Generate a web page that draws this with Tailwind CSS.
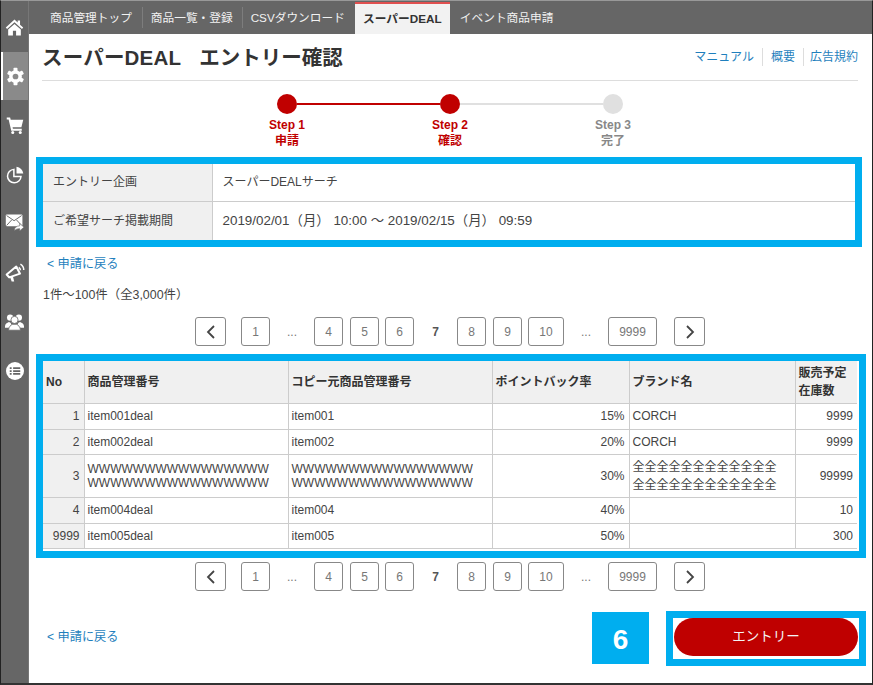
<!DOCTYPE html>
<html lang="ja">
<head>
<meta charset="UTF-8" />
<title>スーパーDEAL エントリー確認</title>
<script src="https://cdn.jsdelivr.net/npm/@tailwindcss/browser@4"></script>
</head>
<body class="bg-white">
<div class="w-[873px] h-[685px] overflow-hidden flex border-l border-l-[#222] border-t border-t-[#999] border-b-2 border-b-[#333] border-r border-r-[#222] font-['Liberation_Sans','Noto_Sans_CJK_JP',sans-serif] text-[12px] text-[#444]">

  <!-- sidebar -->
  <nav class="w-[28px] shrink-0 bg-[#666] flex flex-col text-white border-r border-r-[#777]">
    <div class="h-[51px] flex items-center justify-center pt-[1px]">
      <svg class="w-[19px] h-[19px]" viewBox="0 0 24 24" fill="#fff"><path d="M12 2 1 12l1.600 1.800L12 5.300l9.400 8.500L23 12l-4-3.600V3h-3v2.700z"/><path d="M12 7.500 4 14.600V22h6v-6h4v6h6v-7.400z"/></svg>
    </div>
    <div class="h-[48px] flex items-center justify-center bg-[#8a8a8a] border-l-2 border-l-white">
      <svg class="w-[19px] h-[19px]" viewBox="0 0 24 24"><g fill="#fff"><circle cx="12" cy="12" r="8"/><rect x="9.500" y="1" width="5" height="22" rx="1"/><rect x="9.500" y="1" width="5" height="22" rx="1" transform="rotate(60 12 12)"/><rect x="9.500" y="1" width="5" height="22" rx="1" transform="rotate(120 12 12)"/></g><circle cx="12" cy="12" r="3.600" fill="#8a8a8a"/></svg>
    </div>
    <div class="h-[49px] flex items-center justify-center">
      <svg class="w-[18px] h-[18px]" viewBox="0 0 24 24" fill="#fff"><path d="M1 2h4.500l.8 3H23l-2.500 10H8.800l.4 2H21v2.500H7L3.500 4.500H1z"/><circle cx="9" cy="22" r="2"/><circle cx="19" cy="22" r="2"/></svg>
    </div>
    <div class="h-[49px] flex items-center justify-center pt-[3px]">
      <svg class="w-[18px] h-[18px]" viewBox="0 0 24 24" fill="none"><path d="M10.500 4.500a9 9 0 1 0 9.500 9.500h-9.500z" stroke="#fff" stroke-width="2"/><path d="M14 1a10 10 0 0 1 9 9h-9z" fill="#fff"/></svg>
    </div>
    <div class="h-[49px] flex items-center justify-center pb-[3px]">
      <svg class="w-[19px] h-[19px]" viewBox="0 0 24 24"><rect x="1" y="3" width="21" height="15" rx="1.500" fill="#fff"/><path d="M2 4.500 11.500 11 21 4.500M2 17l6.500-7M21 17l-6.500-7" stroke="#666" stroke-width="1.200" fill="none"/><path d="M11.500 24c.5-4.500 3.200-6.500 7-6.500V14.500l5.500 4.700-5.500 4.700v-2.900c-2.800 0-5 .8-7 3z" fill="#fff" stroke="#666" stroke-width=".8"/></svg>
    </div>
    <div class="h-[49px] flex items-center justify-center">
      <svg class="w-[20px] h-[20px]" viewBox="0 0 24 24" fill="none"><path d="M2 15 13.500 5.500 18 14 5 18.500z" stroke="#fff" stroke-width="2.400" stroke-linejoin="round"/><path d="m6 18 2 5.500h3L9.500 17z" fill="#fff"/><path d="M16.500 6.500a4 4 0 0 1 2 3.500M18.500 2.500a8 8 0 0 1 4 7" stroke="#fff" stroke-width="1.800"/></svg>
    </div>
    <div class="h-[49px] flex items-center justify-center pt-[2px]">
      <svg class="w-[19px] h-[19px]" viewBox="0 0 24 24" fill="#fff"><circle cx="6.500" cy="7" r="4"/><circle cx="17.500" cy="7" r="4"/><path d="M0 18c0-3 2.500-4.500 5-5.500l2 1 2 4V20H0zM24 18c0-3-2.500-4.500-5-5.500l-2 1-2 4V20h9z"/><circle cx="12" cy="10" r="4.500" stroke="#666"/><path d="M4.500 23c0-4.500 3-6.500 5-7.500h5c2 1 5 3 5 7.500z" stroke="#666"/></svg>
    </div>
    <div class="h-[49px] flex items-center justify-center pt-[2px]">
      <svg class="w-[18px] h-[18px]" viewBox="0 0 24 24"><circle cx="12" cy="12" r="12" fill="#fff"/><path d="M5 7h2.500v2.300H5zM9.500 7H19v2.300H9.500zM5 10.900h2.500v2.300H5zM9.500 10.900H19v2.300H9.500zM5 14.800h2.500v2.300H5zM9.500 14.800H19v2.300H9.500z" fill="#666"/></svg>
    </div>
  </nav>

  <div class="flex-1 min-w-0 flex flex-col">
    <!-- tabs -->
    <div class="h-[33px] shrink-0 bg-[#666] flex text-[11.7px] text-[#f2f2f2] pl-[21px]">
      <a class="pr-[10px] flex items-center border-r border-r-[#7d7d7d] my-[6px]">商品管理トップ</a>
      <a class="pl-[8px] pr-[9px] flex items-center border-r border-r-[#7d7d7d] my-[6px]">商品一覧・登録</a>
      <a class="pl-[8px] pr-[10px] flex items-center">CSVダウンロード</a>
      <a class="w-[95px] mt-[1px] flex items-center justify-center bg-[#f2f2f2] text-[#333] border-t-2 border-t-[#e05050] font-bold">スーパーDEAL</a>
      <a class="pl-[10px] flex items-center">イベント商品申請</a>
    </div>

    <main class="flex-1 flex flex-col pl-[7px]">
      <!-- heading -->
      <div class="h-[47px] shrink-0 ml-[6px] mr-[14px] flex items-center justify-between border-b border-b-[#ddd]">
        <h1 class="pt-[2px] text-[20.5px] font-bold text-[#333]"><span class="tracking-[0.2px]">スーパーDEAL</span><span class="ml-[18px]">エントリー確認</span></h1>
        <div class="flex items-center text-[12px] text-[#1f7fbd]">
          <a class="pr-[8px] border-r border-r-[#ddd]">マニュアル</a>
          <a class="px-[8px] border-r border-r-[#ddd]">概要</a>
          <a class="pl-[6px]">広告規約</a>
        </div>
      </div>

      <!-- steps -->
      <div class="h-[76px] shrink-0 pt-[13px]">
        <div class="flex items-center ml-[241px]">
          <span class="w-[20px] h-[20px] rounded-full bg-[#c00000]"></span>
          <span class="w-[143px] h-[2px] bg-[#c00000]"></span>
          <span class="w-[20px] h-[20px] rounded-full bg-[#c00000]"></span>
          <span class="w-[143px] h-[2px] bg-[#e0e0e0]"></span>
          <span class="w-[20px] h-[20px] rounded-full bg-[#e0e0e0]"></span>
        </div>
        <div class="flex ml-[201px] mt-[3px] font-bold text-[12px] leading-[16px] text-center">
          <div class="w-[100px] text-[#c00000]">Step 1<br />申請</div>
          <div class="w-[100px] ml-[63px] text-[#c00000]">Step 2<br />確認</div>
          <div class="w-[100px] ml-[63px] text-[#888]">Step 3<br />完了</div>
        </div>
      </div>

      <!-- entry summary -->
      <div class="w-[826px] h-[90px] shrink-0 border-[7px] border-[#00aeef] bg-white">
        <table class="w-full h-full table-fixed border-collapse text-[12px]">
          <tr class="h-[37px] border-b border-b-[#ccc]">
            <th class="w-[169px] bg-[#f0f0f0] border-r border-r-[#ccc] font-normal text-left pl-[10px]">エントリー企画</th>
            <td class="pl-[10px]">スーパーDEALサーチ</td>
          </tr>
          <tr>
            <th class="bg-[#f0f0f0] border-r border-r-[#ccc] font-normal text-left pl-[10px]">ご希望サーチ掲載期間</th>
            <td class="pl-[10px] text-[13.4px]">2019/02/01（月） 10:00 ～ 2019/02/15（月） 09:59</td>
          </tr>
        </table>
      </div>

      <a class="mt-[9px] ml-[11px] leading-[16px] text-[12.200px] text-[#1f7fbd]">&lt; 申請に戻る</a>
      <p class="mt-[15px] ml-[7px] leading-[16px] text-[12.400px]">1件～100件（全3,000件）</p>

      <!-- pagination top -->
      <div class="mt-[14px] ml-[159px] h-[29px] shrink-0 flex items-center text-[12px] text-[#777]">
        <a class="w-[31px] h-[29px] flex items-center justify-center border border-[#888] rounded-[3px]"><svg class="w-[12px] h-[14px]" viewBox="0 0 12 14" fill="none" stroke="#444" stroke-width="1.800"><path d="M9 1 3 7l6 6"/></svg></a>
        <a class="ml-[15px] w-[29px] h-[29px] flex items-center justify-center border border-[#888] rounded-[3px]">1</a>
        <span class="w-[44px] text-center">...</span>
        <a class="w-[29px] h-[29px] flex items-center justify-center border border-[#888] rounded-[3px]">4</a>
        <a class="ml-[7px] w-[29px] h-[29px] flex items-center justify-center border border-[#888] rounded-[3px]">5</a>
        <a class="ml-[6px] w-[29px] h-[29px] flex items-center justify-center border border-[#888] rounded-[3px]">6</a>
        <b class="w-[43px] text-center text-[#555]">7</b>
        <a class="w-[29px] h-[29px] flex items-center justify-center border border-[#888] rounded-[3px]">8</a>
        <a class="ml-[7px] w-[29px] h-[29px] flex items-center justify-center border border-[#888] rounded-[3px]">9</a>
        <a class="ml-[6px] w-[36px] h-[29px] flex items-center justify-center border border-[#888] rounded-[3px]">10</a>
        <span class="w-[44px] text-center">...</span>
        <a class="w-[49px] h-[29px] flex items-center justify-center border border-[#888] rounded-[3px]">9999</a>
        <a class="ml-[17px] w-[31px] h-[29px] flex items-center justify-center border border-[#888] rounded-[3px]"><svg class="w-[12px] h-[14px]" viewBox="0 0 12 14" fill="none" stroke="#444" stroke-width="1.800"><path d="m3 1 6 6-6 6"/></svg></a>
      </div>

      <!-- item table -->
      <div class="mt-[8px] w-[830px] h-[204px] shrink-0 border-[7px] border-[#00aeef] bg-white">
        <table class="w-[814px] table-fixed border-collapse text-[12px] leading-[14px] border-b border-b-[#ccc]">
          <colgroup>
            <col class="w-[41px]" /><col class="w-[204px]" /><col class="w-[204px]" /><col class="w-[137px]" /><col class="w-[166px]" /><col class="w-[62px]" />
          </colgroup>
          <thead>
            <tr class="h-[42px] bg-[#f0f0f0] text-left text-[#333] border-b border-b-[#ccc]">
              <th class="pl-[3px] border-r border-r-[#ccc]">No</th>
              <th class="pl-[3px] border-r border-r-[#ccc]">商品管理番号</th>
              <th class="pl-[3px] border-r border-r-[#ccc]">コピー元商品管理番号</th>
              <th class="pl-[3px] border-r border-r-[#ccc]">ポイントバック率</th>
              <th class="pl-[3px] border-r border-r-[#ccc]">ブランド名</th>
              <th class="pl-[3px] leading-[18px]">販売予定<br />在庫数</th>
            </tr>
          </thead>
          <tbody>
            <tr class="h-[26px] border-b border-b-[#ccc]">
              <td class="bg-[#f0f0f0] border-r border-r-[#ccc] text-right pr-[4px]">1</td>
              <td class="pl-[3px] border-r border-r-[#ccc]">item001deal</td>
              <td class="pl-[3px] border-r border-r-[#ccc]">item001</td>
              <td class="pr-[4px] border-r border-r-[#ccc] text-right">15%</td>
              <td class="pl-[3px] border-r border-r-[#ccc]">CORCH</td>
              <td class="pr-[4px] text-right">9999</td>
            </tr>
            <tr class="h-[25px] border-b border-b-[#ccc]">
              <td class="bg-[#f0f0f0] border-r border-r-[#ccc] text-right pr-[4px]">2</td>
              <td class="pl-[3px] border-r border-r-[#ccc]">item002deal</td>
              <td class="pl-[3px] border-r border-r-[#ccc]">item002</td>
              <td class="pr-[4px] border-r border-r-[#ccc] text-right">20%</td>
              <td class="pl-[3px] border-r border-r-[#ccc]">CORCH</td>
              <td class="pr-[4px] text-right">9999</td>
            </tr>
            <tr class="h-[43px] border-b border-b-[#ccc]">
              <td class="bg-[#f0f0f0] border-r border-r-[#ccc] text-right pr-[4px]">3</td>
              <td class="pl-[3px] border-r border-r-[#ccc]">WWWWWWWWWWWWWWWW<br />WWWWWWWWWWWWWWWW</td>
              <td class="pl-[3px] border-r border-r-[#ccc]">WWWWWWWWWWWWWWWW<br />WWWWWWWWWWWWWWWW</td>
              <td class="pr-[4px] border-r border-r-[#ccc] text-right">30%</td>
              <td class="pl-[3px] border-r border-r-[#ccc] leading-[18px]">全全全全全全全全全全全全<br />全全全全全全全全全全全全</td>
              <td class="pr-[4px] text-right">99999</td>
            </tr>
            <tr class="h-[26px] border-b border-b-[#ccc]">
              <td class="bg-[#f0f0f0] border-r border-r-[#ccc] text-right pr-[4px]">4</td>
              <td class="pl-[3px] border-r border-r-[#ccc]">item004deal</td>
              <td class="pl-[3px] border-r border-r-[#ccc]">item004</td>
              <td class="pr-[4px] border-r border-r-[#ccc] text-right">40%</td>
              <td class="pl-[3px] border-r border-r-[#ccc]"></td>
              <td class="pr-[4px] text-right">10</td>
            </tr>
            <tr class="h-[25px]">
              <td class="bg-[#f0f0f0] border-r border-r-[#ccc] text-right pr-[4px]">9999</td>
              <td class="pl-[3px] border-r border-r-[#ccc]">item005deal</td>
              <td class="pl-[3px] border-r border-r-[#ccc]">item005</td>
              <td class="pr-[4px] border-r border-r-[#ccc] text-right">50%</td>
              <td class="pl-[3px] border-r border-r-[#ccc]"></td>
              <td class="pr-[4px] text-right">300</td>
            </tr>
          </tbody>
        </table>
      </div>

      <!-- pagination bottom -->
      <div class="mt-[4px] ml-[159px] h-[29px] shrink-0 flex items-center text-[12px] text-[#777]">
        <a class="w-[31px] h-[29px] flex items-center justify-center border border-[#888] rounded-[3px]"><svg class="w-[12px] h-[14px]" viewBox="0 0 12 14" fill="none" stroke="#444" stroke-width="1.800"><path d="M9 1 3 7l6 6"/></svg></a>
        <a class="ml-[15px] w-[29px] h-[29px] flex items-center justify-center border border-[#888] rounded-[3px]">1</a>
        <span class="w-[44px] text-center">...</span>
        <a class="w-[29px] h-[29px] flex items-center justify-center border border-[#888] rounded-[3px]">4</a>
        <a class="ml-[7px] w-[29px] h-[29px] flex items-center justify-center border border-[#888] rounded-[3px]">5</a>
        <a class="ml-[6px] w-[29px] h-[29px] flex items-center justify-center border border-[#888] rounded-[3px]">6</a>
        <b class="w-[43px] text-center text-[#555]">7</b>
        <a class="w-[29px] h-[29px] flex items-center justify-center border border-[#888] rounded-[3px]">8</a>
        <a class="ml-[7px] w-[29px] h-[29px] flex items-center justify-center border border-[#888] rounded-[3px]">9</a>
        <a class="ml-[6px] w-[36px] h-[29px] flex items-center justify-center border border-[#888] rounded-[3px]">10</a>
        <span class="w-[44px] text-center">...</span>
        <a class="w-[49px] h-[29px] flex items-center justify-center border border-[#888] rounded-[3px]">9999</a>
        <a class="ml-[17px] w-[31px] h-[29px] flex items-center justify-center border border-[#888] rounded-[3px]"><svg class="w-[12px] h-[14px]" viewBox="0 0 12 14" fill="none" stroke="#444" stroke-width="1.800"><path d="m3 1 6 6-6 6"/></svg></a>
      </div>

      <!-- footer actions -->
      <div class="mt-[20px] flex items-start">
        <a class="w-[72px] mt-[18px] ml-[11px] leading-[16px] text-[12.200px] text-[#1f7fbd]">&lt; 申請に戻る</a>
        <div class="mt-[1px] ml-[473px] w-[57px] h-[52px] pt-[3px] flex items-center justify-center bg-[#00aeef] text-white text-[28px] font-bold">6</div>
        <div class="ml-[17px] w-[200px] h-[55px] border-[7px] border-[#00aeef] flex items-start pl-[1px]">
          <button class="w-[184px] h-[38px] rounded-full bg-[#bf0000] text-[#f4f4f4] text-[13.500px]">エントリー</button>
        </div>
      </div>
    </main>
  </div>
</div>
</body>
</html>
